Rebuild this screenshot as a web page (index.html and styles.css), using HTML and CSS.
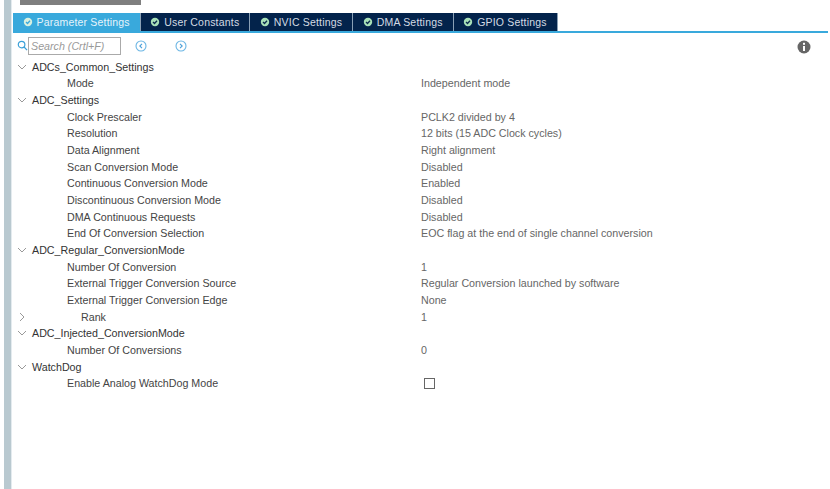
FILE: index.html
```html
<!DOCTYPE html>
<html lang="en">
<head>
<meta charset="utf-8">
<title>ADC Configuration</title>
<link rel="stylesheet" href="styles.css">
</head>
<body>
<div class="app">
  <div class="rail"></div>
  <main class="main">
    <div class="topbar"><div class="topbtn"></div></div>
    <nav class="tabs">
      <div class="tab active"><svg class="check" viewBox="0 0 10 10"><circle cx="5" cy="5" r="4.2" fill="#d8f0e0"/><path d="M3 5.1 4.5 6.5 7 3.8" fill="none" stroke="#3aa9dc" stroke-width="1.3"/></svg>Parameter Settings</div>
      <div class="tab"><svg class="check" viewBox="0 0 10 10"><circle cx="5" cy="5" r="4.2" fill="#a8e0b8"/><path d="M3 5.1 4.5 6.5 7 3.8" fill="none" stroke="#0a2a4e" stroke-width="1.3"/></svg>User Constants</div>
      <div class="tab"><svg class="check" viewBox="0 0 10 10"><circle cx="5" cy="5" r="4.2" fill="#a8e0b8"/><path d="M3 5.1 4.5 6.5 7 3.8" fill="none" stroke="#0a2a4e" stroke-width="1.3"/></svg>NVIC Settings</div>
      <div class="tab"><svg class="check" viewBox="0 0 10 10"><circle cx="5" cy="5" r="4.2" fill="#a8e0b8"/><path d="M3 5.1 4.5 6.5 7 3.8" fill="none" stroke="#0a2a4e" stroke-width="1.3"/></svg>DMA Settings</div>
      <div class="tab"><svg class="check" viewBox="0 0 10 10"><circle cx="5" cy="5" r="4.2" fill="#a8e0b8"/><path d="M3 5.1 4.5 6.5 7 3.8" fill="none" stroke="#0a2a4e" stroke-width="1.3"/></svg>GPIO Settings</div>
    </nav>
    <div class="toolbar">
      <svg class="search-icon" viewBox="0 0 12 12"><circle cx="5" cy="5" r="3.6" fill="none" stroke="#3aa0d8" stroke-width="1.3"/><path d="M7.7 7.7 11 11" stroke="#3aa0d8" stroke-width="1.4"/></svg>
      <div class="search">Search (Crtl+F)</div>
      <svg class="nav-icon first" viewBox="0 0 12 12"><circle cx="6" cy="6" r="5" fill="none" stroke="#6cb6e4" stroke-width="1.1"/><path d="M7 3.8 4.8 6 7 8.2" fill="none" stroke="#4a9fd8" stroke-width="1.1"/></svg>
      <svg class="nav-icon" viewBox="0 0 12 12"><circle cx="6" cy="6" r="5" fill="none" stroke="#6cb6e4" stroke-width="1.1"/><path d="M5 3.8 7.2 6 5 8.2" fill="none" stroke="#4a9fd8" stroke-width="1.1"/></svg>
      <svg class="info" viewBox="0 0 14 14"><circle cx="7" cy="7" r="6.5" fill="#666"/><rect x="6" y="2.8" width="2" height="2" fill="#fff"/><rect x="6" y="6" width="2" height="5" fill="#fff"/></svg>
    </div>
    <div class="tree">
      <div class="row group"><svg class="chev" viewBox="0 0 10 10"><path d="M1 3 5 7 9 3" fill="none" stroke="#999"/></svg><span>ADCs_Common_Settings</span></div>
      <div class="row"><span class="name">Mode</span><span class="val">Independent mode</span></div>
      <div class="row group"><svg class="chev" viewBox="0 0 10 10"><path d="M1 3 5 7 9 3" fill="none" stroke="#999"/></svg><span>ADC_Settings</span></div>
      <div class="row"><span class="name">Clock Prescaler</span><span class="val">PCLK2 divided by 4</span></div>
      <div class="row"><span class="name">Resolution</span><span class="val">12 bits (15 ADC Clock cycles)</span></div>
      <div class="row"><span class="name">Data Alignment</span><span class="val">Right alignment</span></div>
      <div class="row"><span class="name">Scan Conversion Mode</span><span class="val">Disabled</span></div>
      <div class="row"><span class="name">Continuous Conversion Mode</span><span class="val">Enabled</span></div>
      <div class="row"><span class="name">Discontinuous Conversion Mode</span><span class="val">Disabled</span></div>
      <div class="row"><span class="name">DMA Continuous Requests</span><span class="val">Disabled</span></div>
      <div class="row"><span class="name">End Of Conversion Selection</span><span class="val">EOC flag at the end of single channel conversion</span></div>
      <div class="row group"><svg class="chev" viewBox="0 0 10 10"><path d="M1 3 5 7 9 3" fill="none" stroke="#999"/></svg><span>ADC_Regular_ConversionMode</span></div>
      <div class="row"><span class="name">Number Of Conversion</span><span class="val">1</span></div>
      <div class="row"><span class="name">External Trigger Conversion Source</span><span class="val">Regular Conversion launched by software</span></div>
      <div class="row"><span class="name">External Trigger Conversion Edge</span><span class="val">None</span></div>
      <div class="row"><svg class="chev closed" viewBox="0 0 10 10"><path d="M3 1 7 5 3 9" fill="none" stroke="#999"/></svg><span class="name rank">Rank</span><span class="val">1</span></div>
      <div class="row group"><svg class="chev" viewBox="0 0 10 10"><path d="M1 3 5 7 9 3" fill="none" stroke="#999"/></svg><span>ADC_Injected_ConversionMode</span></div>
      <div class="row"><span class="name">Number Of Conversions</span><span class="val">0</span></div>
      <div class="row group"><svg class="chev" viewBox="0 0 10 10"><path d="M1 3 5 7 9 3" fill="none" stroke="#999"/></svg><span>WatchDog</span></div>
      <div class="row"><span class="name">Enable Analog WatchDog Mode</span><span class="val"><span class="box"></span></span></div>
    </div>
  </main>
</div>
</body>
</html>
```
FILE: styles.css
```css
html, body { margin: 0; height: 100%; background: #fff; overflow: hidden; }
body { font-family: "Liberation Sans", Arial, sans-serif; font-size: 10.7px; color: #444; }
.app { display: flex; height: 489px; padding-left: 4px; box-sizing: border-box; }
.rail { width: 7px; background: #b9c9d0; border-right: 1px solid #e4ebef; margin-right: 1px; flex: none; }
.main { flex: 1; min-width: 0; padding-right: 2px; }
.topbar { height: 13px; padding-left: 7px; }
.topbtn { width: 121px; height: 5px; background: #7f7f7f; }
.tabs { display: flex; height: 18px; border-bottom: 2px solid #39a9dc; }
.tab { display: flex; align-items: center; gap: 4px; padding: 0 10px 0 9.5px; font-size: 10.5px; background: #03234b; color: #d4dbe3; letter-spacing: .19px; border-right: 1px solid #8aa0b5; white-space: nowrap; }
.tab.active { background: #39a9dc; color: #e6f4fb; }
.check { width: 10px; height: 10px; flex: none; }
.toolbar { display: flex; align-items: center; height: 25.4px; padding-left: 4px; }
.search-icon { width: 11px; height: 11px; flex: none; }
.search { width: 93px; height: 18px; line-height: 16px; box-sizing: border-box; border: 1px solid #aaa; padding-left: 2px; font-style: italic; color: #999; }
.nav-icon { width: 12px; height: 12px; flex: none; margin-left: 28px; }
.nav-icon.first { margin-left: 14px; }
.info { width: 14px; height: 14px; margin: 2px 17px 0 auto; flex: none; }
.tree { display: flex; flex-direction: column; }
.row { display: flex; align-items: center; height: 16.67px; white-space: nowrap; position: relative; }
.group { color: #333; }
.chev { width: 10px; height: 10px; flex: none; margin: 0 5px 0 4px; }
.name { width: 354px; margin-left: 54px; flex: none; }
.chev.closed { margin: 0; position: absolute; left: 4px; }
.rank { padding-left: 14px; box-sizing: border-box; }
.val { color: #666; }
.box { display: block; box-sizing: border-box; width: 11px; height: 11px; border: 1px solid #666; margin-left: 3px; }
```
